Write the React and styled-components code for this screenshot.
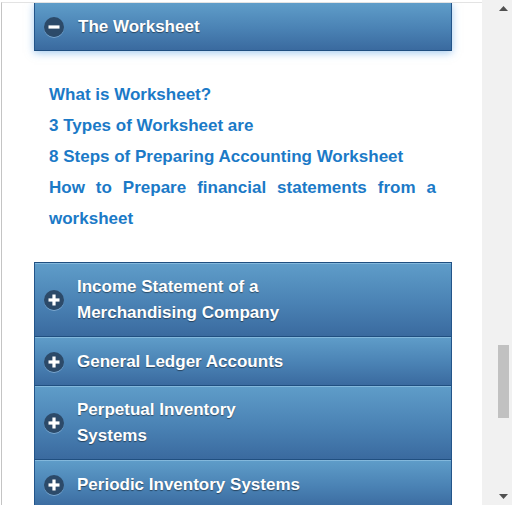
import React from 'react';
import styled, { createGlobalStyle } from 'styled-components';

const GlobalStyle = createGlobalStyle`
  html, body {
    margin: 0;
    padding: 0;
    overflow: hidden;
    background: #ffffff;
  }
  body {
    font-family: "Liberation Sans", Arial, sans-serif;
  }
`;

const Page = styled.div`
  width: 512px;
  height: 505px;
  display: flex;
  overflow: hidden;
`;

const Main = styled.div`
  flex: 1;
  border-top: 1px solid #e3e3e3;
  border-left: 1px solid #c4c4c4;
  margin-top: 2px;
  margin-left: 1px;
  padding-left: 32px;
  padding-right: 30px;
  overflow: hidden;
`;

const Scrollbar = styled.div`
  width: 30px;
  background: #f1f1f1;
  display: flex;
  flex-direction: column;
  align-items: flex-end;
  padding-right: 3px;
  box-sizing: border-box;
`;

const Arrow = styled.div`
  width: 11px;
  height: 17px;
  display: flex;
  align-items: center;
  justify-content: center;
`;

const Thumb = styled.div`
  width: 11px;
  height: 73px;
  background: #c1c1c1;
  margin-top: ${({ offset }) => offset}px;
`;

const Spacer = styled.div`
  flex: 1;
`;

const Bar = styled.div`
  display: flex;
  align-items: center;
  box-sizing: border-box;
  color: #ffffff;
  font-weight: bold;
  font-size: 17px;
  line-height: 26px;
  text-shadow: 0 1px 1px rgba(0, 0, 0, 0.45);
  background: linear-gradient(to bottom, #5f9dc9 0%, #4a82b4 55%, #3a6a9f 100%);
  border-left: 1px solid #23558a;
  border-right: 1px solid #23558a;
`;

const Header = styled(Bar)`
  height: 48px;
  gap: 14px;
  padding: 1px 0 0 9px;
  border-bottom: 1px solid #1f4e80;
  box-shadow: 0 2px 8px rgba(90, 160, 225, 0.55);
`;

const Item = styled(Bar)`
  min-height: 49px;
  gap: 13px;
  padding: 11px 10px 10px 9px;
  border-top: 1px solid #204f80;
  box-shadow: inset 0 1px 0 rgba(160, 205, 235, 0.55);
`;

const Links = styled.div`
  padding: 28px 16px 28px 15px;
  text-align: justify;
`;

const LinkText = styled.a`
  display: block;
  color: #1b7ac7;
  font-weight: bold;
  font-size: 17px;
  line-height: 31px;
  text-decoration: none;
`;

const IconWrap = styled.span`
  width: 20px;
  height: 20px;
  flex: none;
  border-radius: 50%;
  box-shadow: 0 1px 0 rgba(190, 220, 245, 0.45);
  display: flex;
`;

const ToggleIcon = ({ open }) => (
  <IconWrap>
    <svg width="20" height="20" viewBox="0 0 20 20">
      <circle cx="10" cy="10" r="10" fill="#2c4a69" />
      <rect x="4.5" y="8.4" width="11" height="3.2" fill="#ffffff" />
      {!open && <rect x="8.4" y="4.5" width="3.2" height="11" fill="#ffffff" />}
    </svg>
  </IconWrap>
);

const links = [
  'What is Worksheet?',
  '3 Types of Worksheet are',
  '8 Steps of Preparing Accounting Worksheet',
  'How to Prepare financial statements from a worksheet',
];

const items = [
  ['Income Statement of a', 'Merchandising Company'],
  ['General Ledger Accounts'],
  ['Perpetual Inventory', 'Systems'],
  ['Periodic Inventory Systems'],
];

const App = () => (
  <>
    <GlobalStyle />
    <Page>
      <Main>
        <Header>
          <ToggleIcon open />
          <span>The Worksheet</span>
        </Header>
        <Links>
          {links.map(text => (
            <LinkText key={text} href="#">
              {text}
            </LinkText>
          ))}
        </Links>
        {items.map(lines => (
          <Item key={lines.join(' ')}>
            <ToggleIcon />
            <span>
              {lines.map((line, i) => (
                <React.Fragment key={line}>
                  {i > 0 && <br />}
                  {line}
                </React.Fragment>
              ))}
            </span>
          </Item>
        ))}
      </Main>
      <Scrollbar>
        <Arrow>
          <svg width="9" height="5" viewBox="0 0 9 5">
            <polygon points="4.5,0 9,5 0,5" fill="#505050" />
          </svg>
        </Arrow>
        <Thumb offset={328} />
        <Spacer />
        <Arrow>
          <svg width="9" height="5" viewBox="0 0 9 5">
            <polygon points="0,0 9,0 4.5,5" fill="#505050" />
          </svg>
        </Arrow>
      </Scrollbar>
    </Page>
  </>
);

export default App;
